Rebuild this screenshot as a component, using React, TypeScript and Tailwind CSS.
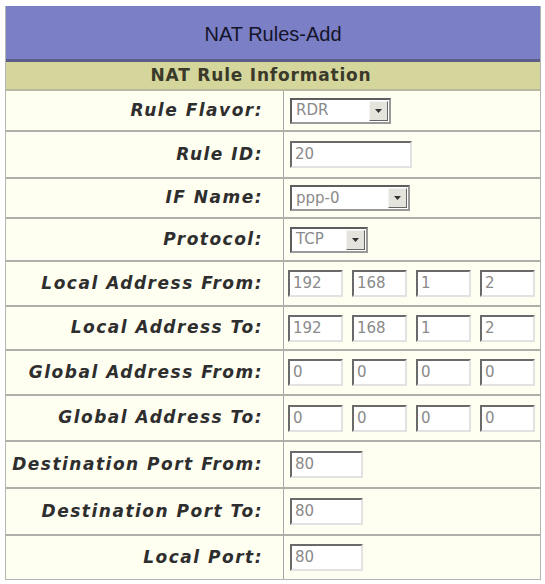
import React from "react";

type Row = {
  label: string;
  h: string;
  kind: "select" | "text" | "ip";
  value?: string;
  w?: string;
  ip?: string[];
};

const rows: Row[] = [
  { label: "Rule Flavor:", h: "h-[41px]", kind: "select", value: "RDR", w: "w-[101px]" },
  { label: "Rule ID:", h: "h-[47px]", kind: "text", value: "20", w: "w-[122px]" },
  { label: "IF Name:", h: "h-[40px]", kind: "select", value: "ppp-0", w: "w-[120px]" },
  { label: "Protocol:", h: "h-[43px]", kind: "select", value: "TCP", w: "w-[78px]" },
  { label: "Local Address From:", h: "h-[45px]", kind: "ip", ip: ["192", "168", "1", "2"] },
  { label: "Local Address To:", h: "h-[44px]", kind: "ip", ip: ["192", "168", "1", "2"] },
  { label: "Global Address From:", h: "h-[45px]", kind: "ip", ip: ["0", "0", "0", "0"] },
  { label: "Global Address To:", h: "h-[46px]", kind: "ip", ip: ["0", "0", "0", "0"] },
  { label: "Destination Port From:", h: "h-[47px]", kind: "text", value: "80", w: "w-[73px]" },
  { label: "Destination Port To:", h: "h-[47px]", kind: "text", value: "80", w: "w-[73px]" },
  { label: "Local Port:", h: "h-[43px]", kind: "text", value: "80", w: "w-[73px]" },
];

const boxCls =
  "h-[27px] bg-white border-2 border-t-[#6a6a6a] border-l-[#6a6a6a] border-b-[#e2e2e2] border-r-[#e2e2e2] flex items-center pl-[3px] text-[15px] text-[#8a8a8a] font-['DejaVu_Sans',sans-serif]";

function Field({ row }: { row: Row }) {
  if (row.kind === "ip") {
    return (
      <div className="flex gap-[9px] pl-[4px]">
        {row.ip!.map((v, i) => (
          <div key={i} className={`${boxCls} w-[55px]`}>
            {v}
          </div>
        ))}
      </div>
    );
  }
  if (row.kind === "select") {
    return (
      <div
        className={`${row.w} h-[26px] ml-[6px] bg-white border-2 border-t-[#5e5e5e] border-l-[#5e5e5e] border-b-[#9a9a9a] border-r-[#9a9a9a] flex items-center justify-between`}
      >
        <span className="pl-[4px] text-[15px] text-[#8a8a8a] font-['DejaVu_Sans',sans-serif]">{row.value}</span>
        <span className="w-[19px] h-[20px] mr-[1px] bg-[#e4e4dc] border border-t-[#f4f4f4] border-l-[#f4f4f4] border-b-[#666] border-r-[#666] flex items-center justify-center">
          <svg width="7" height="4" viewBox="0 0 7 4">
            <path d="M0 0h7L3.5 4z" fill="#333" />
          </svg>
        </span>
      </div>
    );
  }
  return <div className={`${boxCls} ${row.w} ml-[6px]`}>{row.value}</div>;
}

export default function App() {
  return (
    <div className="w-[545px] h-[584px] bg-white pt-[6px] pl-[5px]">
      <div className="w-[536px] border-l border-r border-b border-[#b4b4b4]">
        <div className="h-[56px] bg-[#7b7fc6] border-b-[3px] border-[#5c5d86] flex items-center justify-center pt-[2px]">
          <span className="text-[20px] text-[#14142a] font-['Liberation_Sans',Arial,sans-serif]">NAT Rules-Add</span>
        </div>
        <div className="h-[29px] bg-[#d5d69c] border-b-2 border-[#b9b9a0] flex items-center justify-center pr-[24px]">
          <span className="text-[17px] font-bold text-[#3a3a2a] tracking-[0.8px] font-['DejaVu_Sans',Verdana,sans-serif]">
            NAT Rule Information
          </span>
        </div>
        {rows.map((row, i) => (
          <div
            key={i}
            className={`${row.h} grid grid-cols-[278px_1fr] bg-[#fefef1] ${i < rows.length - 1 ? "border-b-2 border-[#b0b0aa]" : ""}`}
          >
            <div className="flex items-center justify-end pr-[20px] border-r border-[#a8a8a8]">
              <span className="text-[17px] font-bold italic text-[#2e2e2e] tracking-[1.5px] whitespace-nowrap font-['DejaVu_Sans',Verdana,sans-serif]">
                {row.label}
              </span>
            </div>
            <div className="flex items-center">
              <Field row={row} />
            </div>
          </div>
        ))}
      </div>
    </div>
  );
}
